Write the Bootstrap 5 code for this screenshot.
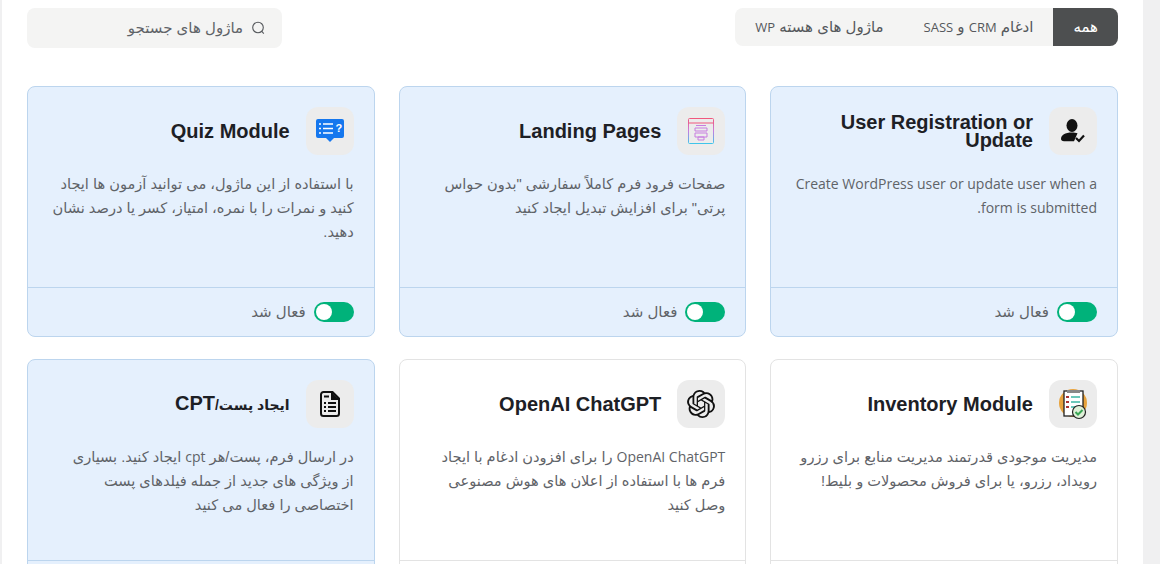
<!DOCTYPE html>
<html lang="fa" dir="rtl">
<head>
  <meta charset="UTF-8">
  <meta name="viewport" content="width=device-width, initial-scale=1.0">
  <title>ماژول ها</title>
  <link href="https://cdn.jsdelivr.net/npm/bootstrap@5.3.0/dist/css/bootstrap.min.css" rel="stylesheet">
  <style>
    html, body { height: 564px; overflow: hidden; }
    body {
      background: #f0f0f1;
      font-family: "Liberation Sans", "DejaVu Sans", sans-serif;
      font-size: 14px;
      color: #5f6368;
    }
    .latin-run { font-family: "Open Sans", sans-serif; font-size: 14px; }
    .filter-tab .latin-run { font-size: 13px; }
    .page-shell {
      background: #fff;
      margin: 0 17px 0 2px;
      height: 564px;
      padding: 8px 25px 0 25px;
      overflow: hidden;
    }
    .top-bar { height: 78px; }
    .filter-tabs { height: 38px; background: #f4f4f3; border-radius: 8px; overflow: hidden; }
    .filter-tab {
      border: 0;
      background: transparent;
      color: #55585c;
      font-size: 15px;
      padding: 0 20px;
    }
    .filter-tab.is-active { background: #4d4f50; color: #fff; }
    .search-box {
      width: 255px;
      height: 40px;
      background: #f4f4f3;
      border-radius: 8px;
      padding: 0 17px;
      color: #5f6368;
      font-size: 15px;
    }
    .module-grid { display: grid; grid-template-columns: repeat(3, 1fr); gap: 22px 24px; }
    .module-card {
      height: 251px;
      border: 1px solid #e3e3e3;
      border-radius: 8px;
      background: #fff;
    }
    .module-card.is-on { background: #e5f0fd; border-color: #bcd5ee; }
    .module-body { padding: 20px 20px 0; flex: 1; }
    .module-icon {
      width: 48px;
      height: 48px;
      flex: none;
      border-radius: 12px;
      background: #ececec;
    }
    .module-title {
      font-size: 20px;
      font-weight: 700;
      line-height: 18px;
      color: #1d2025;
      margin: 0;
    }
    .title-fa { font-size: 14px; }
    .module-text { margin: 17px 0 0; font-size: 14.6px; line-height: 24px; color: #5f6368; }
    .module-foot {
      height: 49px;
      padding: 0 20px;
      border-top: 1px solid #e3e3e3;
      font-size: 15px;
    }
    .is-on .module-foot { border-top-color: #bcd5ee; }
    .form-switch .form-check-input.module-toggle {
      width: 40px;
      height: 20px;
      margin: 0;
      float: none;
      border: 0;
      background-color: #00b27a;
      background-position: left center;
      background-size: 20px 20px;
      background-image: url("data:image/svg+xml,%3csvg xmlns='http://www.w3.org/2000/svg' viewBox='-4 -4 8 8'%3e%3ccircle r='3.2' fill='%23fff'/%3e%3c/svg%3e");
      box-shadow: none;
    }
  </style>
</head>
<body>
  <div class="page-shell">

    <!-- filters and search -->
    <div class="top-bar d-flex justify-content-between align-items-start">
      <div class="filter-tabs d-flex">
        <button class="filter-tab is-active">همه</button>
        <button class="filter-tab">ادغام <span class="latin-run">CRM</span> و <span class="latin-run">SASS</span></button>
        <button class="filter-tab">ماژول های هسته <span class="latin-run">WP</span></button>
      </div>
      <div class="search-box d-flex align-items-center gap-2">
        <svg width="14" height="14" viewBox="0 0 14 14" fill="none" stroke="#55585c" stroke-width="1.1"><circle cx="7" cy="6.5" r="5.3"/><path d="M10.8 10.4 12.8 12.6"/></svg>
        <span>ماژول های جستجو</span>
      </div>
    </div>

    <!-- module cards -->
    <div class="module-grid">

      <div class="module-card is-on d-flex flex-column">
        <div class="module-body">
          <div class="d-flex align-items-center gap-3">
            <div class="module-icon d-flex align-items-center justify-content-center">
              <svg width="28" height="28" viewBox="0 0 28 28"><ellipse cx="13" cy="8.500" rx="5.500" ry="6.500" fill="#111"/><path d="M2 22c0-4 4-6.500 11-6.500 2 0 4 .2 5.500.7l-3.500 8H5c-2 0-3-1-3-2.200z" fill="#111"/><path d="M17 21l3 3 5-5.500" fill="none" stroke="#111" stroke-width="2.200"/></svg>
            </div>
            <h3 class="module-title">User Registration or Update</h3>
          </div>
          <p class="module-text"><span class="latin-run">Create WordPress user or update user when a form is submitted.</span></p>
        </div>
        <div class="module-foot d-flex align-items-center gap-2">
          <div class="form-check form-switch m-0 p-0 d-flex align-items-center"><input class="form-check-input module-toggle" type="checkbox" role="switch" checked></div>
          <span>فعال شد</span>
        </div>
      </div>

      <div class="module-card is-on d-flex flex-column">
        <div class="module-body">
          <div class="d-flex align-items-center gap-3">
            <div class="module-icon d-flex align-items-center justify-content-center">
              <svg width="28" height="28" viewBox="0 0 28 28" fill="none" stroke-width="1"><defs><linearGradient id="landGrad" x1="0" y1="0" x2="0" y2="1"><stop offset="0" stop-color="#f0587e"/><stop offset=".5" stop-color="#c77ce0"/><stop offset="1" stop-color="#3fc4ea"/></linearGradient></defs><rect x="1.500" y="1.500" width="25" height="25" rx="1" stroke="url(#landGrad)"/><path d="M1.500 6h25" stroke="#f0587e"/><path d="M9 8.500h10M8 11h12v3H8zM8 16h12v4H8zM11 23h6v-3h-6z" stroke="#c77ce0"/></svg>
            </div>
            <h3 class="module-title">Landing Pages</h3>
          </div>
          <p class="module-text">صفحات فرود فرم کاملاً سفارشی "بدون حواس<br>پرتی" برای افزایش تبدیل ایجاد کنید</p>
        </div>
        <div class="module-foot d-flex align-items-center gap-2">
          <div class="form-check form-switch m-0 p-0 d-flex align-items-center"><input class="form-check-input module-toggle" type="checkbox" role="switch" checked></div>
          <span>فعال شد</span>
        </div>
      </div>

      <div class="module-card is-on d-flex flex-column">
        <div class="module-body">
          <div class="d-flex align-items-center gap-3">
            <div class="module-icon d-flex align-items-center justify-content-center">
              <svg width="28" height="24" viewBox="0 0 28 24"><path d="M2 0h24a2 2 0 0 1 2 2v15a2 2 0 0 1-2 2h-8l-4 4-4-4H2a2 2 0 0 1-2-2V2a2 2 0 0 1 2-2z" fill="#1577ee"/><path d="M7 5h10M7 9.500h10M7 14h10" stroke="#fff" stroke-width="1.600"/><path d="M3 5h2M3 9.500h2M3 14h2" stroke="#fff" stroke-width="1.600"/><text x="19.500" y="13" fill="#fff" font-size="11" font-weight="700" font-family="Liberation Sans" direction="ltr">?</text></svg>
            </div>
            <h3 class="module-title">Quiz Module</h3>
          </div>
          <p class="module-text">با استفاده از این ماژول، می توانید آزمون ها ایجاد<br>کنید و نمرات را با نمره، امتیاز، کسر یا درصد نشان<br>دهید.</p>
        </div>
        <div class="module-foot d-flex align-items-center gap-2">
          <div class="form-check form-switch m-0 p-0 d-flex align-items-center"><input class="form-check-input module-toggle" type="checkbox" role="switch" checked></div>
          <span>فعال شد</span>
        </div>
      </div>

      <div class="module-card d-flex flex-column">
        <div class="module-body">
          <div class="d-flex align-items-center gap-3">
            <div class="module-icon d-flex align-items-center justify-content-center">
              <svg width="30" height="34" viewBox="0 0 30 34"><circle cx="15" cy="16" r="14" fill="#e8a33d"/><rect x="6" y="4" width="19" height="25" fill="#fff" stroke="#222" stroke-width="1.300"/><rect x="9" y="3" width="13" height="3" fill="#888"/><path d="M8 10h3M8 15h3M8 20h3" stroke="#a33" stroke-width="2"/><path d="M13 10h9M13 15h9M13 20h5" stroke="#3cb6a4" stroke-width="1.300"/><circle cx="21" cy="25" r="6.500" fill="#dff0d8" stroke="#222" stroke-width="1.200"/><path d="M17.500 25l2.500 2.500 4.500-4.500" fill="none" stroke="#3aa655" stroke-width="2"/></svg>
            </div>
            <h3 class="module-title">Inventory Module</h3>
          </div>
          <p class="module-text">مدیریت موجودی قدرتمند مدیریت منابع برای رزرو<br>رویداد، رزرو، یا برای فروش محصولات و بلیط!</p>
        </div>
        <div class="module-foot"></div>
      </div>

      <div class="module-card d-flex flex-column">
        <div class="module-body">
          <div class="d-flex align-items-center gap-3">
            <div class="module-icon d-flex align-items-center justify-content-center">
              <svg width="28" height="28" viewBox="0 0 24 24" fill="#111"><path d="M22.2819 9.8211a5.9847 5.9847 0 0 0-.5157-4.9108 6.0462 6.0462 0 0 0-6.5098-2.9A6.0651 6.0651 0 0 0 4.9807 4.1818a5.9847 5.9847 0 0 0-3.9977 2.9 6.0462 6.0462 0 0 0 .7427 7.0966 5.98 5.98 0 0 0 .511 4.9107 6.051 6.051 0 0 0 6.5146 2.9001A5.9847 5.9847 0 0 0 13.2599 24a6.0557 6.0557 0 0 0 5.7718-4.2058 5.9894 5.9894 0 0 0 3.9977-2.9001 6.0557 6.0557 0 0 0-.7475-7.0729zm-9.022 12.6081a4.4755 4.4755 0 0 1-2.8764-1.0408l.1419-.0804 4.7783-2.7582a.7948.7948 0 0 0 .3927-.6813v-6.7369l2.02 1.1686a.071.071 0 0 1 .038.052v5.5826a4.504 4.504 0 0 1-4.4945 4.4944zm-9.6607-4.1254a4.4708 4.4708 0 0 1-.5346-3.0137l.142.0852 4.783 2.7582a.7712.7712 0 0 0 .7806 0l5.8428-3.3685v2.3324a.0804.0804 0 0 1-.0332.0615L9.74 19.9502a4.4992 4.4992 0 0 1-6.1408-1.6464zM2.3408 7.8956a4.485 4.485 0 0 1 2.3655-1.9728V11.6a.7664.7664 0 0 0 .3879.6765l5.8144 3.3543-2.0201 1.1685a.0757.0757 0 0 1-.071 0l-4.8303-2.7865A4.504 4.504 0 0 1 2.3408 7.872zm16.5963 3.8558L13.1038 8.364 15.1192 7.2a.0757.0757 0 0 1 .071 0l4.8303 2.7913a4.4944 4.4944 0 0 1-.6765 8.1042v-5.6772a.79.79 0 0 0-.407-.667zm2.0107-3.0231l-.142-.0852-4.7735-2.7818a.7759.7759 0 0 0-.7854 0L9.409 9.2297V6.8974a.0662.0662 0 0 1 .0284-.0615l4.8303-2.7866a4.4992 4.4992 0 0 1 6.6802 4.66zM8.3065 12.863l-2.02-1.1638a.0804.0804 0 0 1-.038-.0567V6.0742a4.4992 4.4992 0 0 1 7.3757-3.4537l-.142.0805L8.704 5.459a.7948.7948 0 0 0-.3927.6813zm1.0976-2.3654l2.602-1.4998 2.6069 1.4998v2.9994l-2.5974 1.4997-2.6067-1.4997Z"/></svg>
            </div>
            <h3 class="module-title">OpenAI ChatGPT</h3>
          </div>
          <p class="module-text"><span class="latin-run">OpenAI ChatGPT</span> را برای افزودن ادغام با ایجاد<br>فرم ها با استفاده از اعلان های هوش مصنوعی<br>وصل کنید</p>
        </div>
        <div class="module-foot"></div>
      </div>

      <div class="module-card is-on d-flex flex-column">
        <div class="module-body">
          <div class="d-flex align-items-center gap-3">
            <div class="module-icon d-flex align-items-center justify-content-center">
              <svg width="20" height="26" viewBox="0 0 20 26" fill="none" stroke="#111" stroke-width="2"><path d="M3.500 1h9L19 7.500V22.500A2.500 2.500 0 0 1 16.500 25h-13A2.500 2.500 0 0 1 1 22.500v-19A2.500 2.500 0 0 1 3.500 1z"/><path d="M12 1.500V8h6.500" fill="#111"/><path d="M4 5.500h5M8 12h8M8 16h8M8 20h8M4 12h2M4 16h2M4 20h2"/></svg>
            </div>
            <h3 class="module-title"><span class="title-fa">ایجاد پست/</span>CPT</h3>
          </div>
          <p class="module-text">در ارسال فرم، پست/هر <span class="latin-run">cpt</span> ایجاد کنید. بسیاری<br>از ویژگی های جدید از جمله فیلدهای پست<br>اختصاصی را فعال می کنید</p>
        </div>
        <div class="module-foot"></div>
      </div>

    </div>
  </div>
  <script src="https://cdn.jsdelivr.net/npm/bootstrap@5.3.0/dist/js/bootstrap.bundle.min.js"></script>
</body>
</html>
